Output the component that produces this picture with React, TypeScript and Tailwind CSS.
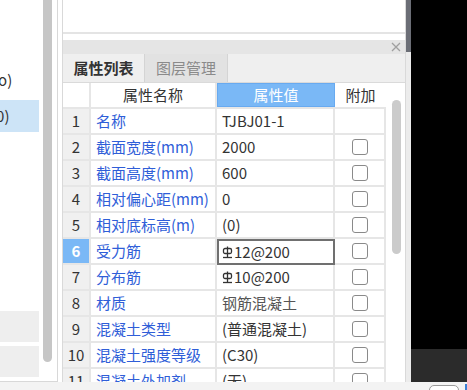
import React from "react";

const font = { fontFamily: '"Noto Sans CJK SC", "Noto Sans", sans-serif' };

type Row = { no: string; name: string; value: React.ReactNode; check: boolean; grayValue?: boolean };

function Rebar() {
  return (
    <svg width="11" height="13" viewBox="0 0 11 13" className="mr-[1px] inline-block" fill="none" stroke="#333" strokeWidth="1.3">
      <path d="M5.5 0.5 V11.5" />
      <rect x="1.5" y="2.5" width="8" height="5" rx="1.5" />
      <path d="M1 11.5 H10" />
    </svg>
  );
}

const rows: Row[] = [
  { no: "1", name: "名称", value: "TJBJ01-1", check: false },
  { no: "2", name: "截面宽度(mm)", value: "2000", check: true },
  { no: "3", name: "截面高度(mm)", value: "600", check: true },
  { no: "4", name: "相对偏心距(mm)", value: "0", check: true },
  { no: "5", name: "相对底标高(m)", value: "(0)", check: true },
  {
    no: "6",
    name: "受力筋",
    value: (
      <span className="flex items-center">
        <Rebar />
        12@200
      </span>
    ),
    check: true,
  },
  {
    no: "7",
    name: "分布筋",
    value: (
      <span className="flex items-center">
        <Rebar />
        10@200
      </span>
    ),
    check: true,
  },
  { no: "8", name: "材质", value: "钢筋混凝土", check: true, grayValue: true },
  { no: "9", name: "混凝土类型", value: "(普通混凝土)", check: true },
  { no: "10", name: "混凝土强度等级", value: "(C30)", check: true },
  { no: "11", name: "混凝土外加剂", value: "(无)", check: true },
];

function Checkbox() {
  return <div className="h-[16px] w-[16px] rounded-[3px] border-[1.5px] border-[#8a8a8a] bg-white" />;
}

export default function App() {
  return (
    <div style={font} className="flex h-[390px] w-[467px] flex-col overflow-hidden bg-white text-[15px] text-[#333]">
      <div className="flex h-[382px] flex-row">
        {/* left panel */}
        <div className="flex w-[58px] flex-row border-r border-b border-[#d8d8d8]">
          <div className="flex w-[39px] flex-col overflow-hidden">
            <div className="mt-[68px] flex h-[24px] items-center whitespace-nowrap text-[#333]">
              <span className="ml-[-7px]">(o)</span>
            </div>
            <div className="mt-[8px] flex h-[32px] items-center whitespace-nowrap bg-[#cde4f7] text-[#333]">
              <span className="ml-[-9px]">(0)</span>
            </div>
            <div className="mt-[179px] h-[31px] bg-[#eeeeee]" />
            <div className="mt-[4px] h-[31px] bg-[#eeeeee]" />
          </div>
          <div className="ml-[4px] h-[362px] w-[9px] rounded-b-full bg-[#c6c6c6]" />
        </div>
        <div className="w-[4px]" />

        {/* right panel */}
        <div className="flex w-[344px] flex-col border-x border-[#d9d9d9]">
          <div className="h-[34px] border-b-2 border-[#e4e4e4] bg-white" />
          <div className="h-[6px] bg-white" />
          <div className="flex h-[14px] items-center justify-end bg-[#e5e5e5] pr-[4px]">
            <svg width="10" height="10" viewBox="0 0 10 10" stroke="#a0a0a0" strokeWidth="1.3">
              <path d="M1 1 L9 9 M9 1 L1 9" />
            </svg>
          </div>
          <div className="flex h-[29px] flex-row border-b border-[#dadada] bg-[#efefef]">
            <div className="flex w-[82px] items-center justify-center border-r border-[#d4d4d4] font-bold text-[#333]">
              属性列表
            </div>
            <div className="flex w-[83px] items-center justify-center border-r border-[#d4d4d4] bg-[#e2e2e2] text-[#8a8a8a]">
              图层管理
            </div>
          </div>

          <div className="flex min-h-0 flex-1 flex-row overflow-hidden">
            <div className="w-[323px]">
              {/* header */}
              <div className="flex h-[26px] flex-row border-b-2 border-[#e6e6e6]">
                <div className="w-[28px] border-r-2 border-[#e6e6e6] bg-white" />
                <div className="flex w-[126px] items-center justify-center border-r-2 border-[#e6e6e6] bg-white">属性名称</div>
                <div className="flex w-[118px] items-center justify-center border border-[#68aaf0] bg-[#7ab8f6] text-white">属性值</div>
                <div className="flex w-[51px] items-center justify-center bg-white">附加</div>
              </div>
              {rows.map((r) => {
                const sel = r.no === "6";
                return (
                  <div key={r.no} className="flex h-[26px] flex-row border-b-2 border-[#e6e6e6]">
                    <div
                      className={
                        sel
                          ? "flex w-[28px] items-center justify-center border-r-2 border-[#e6e6e6] bg-[#7ab8f6] font-bold text-white"
                          : "flex w-[28px] items-center justify-center border-r-2 border-[#e6e6e6] bg-[#f0f0f0] text-[#333]"
                      }
                    >
                      {r.no}
                    </div>
                    <div className="flex w-[126px] items-center overflow-hidden whitespace-nowrap border-r-2 border-[#e6e6e6] pl-[5px] text-[#2f5ed8]">
                      {r.name}
                    </div>
                    <div
                      className={
                        sel
                          ? "mb-[-2px] flex w-[118px] items-center border-2 border-[#707070] pl-[3px] text-[#333]"
                          : r.grayValue
                          ? "flex w-[118px] items-center border-r-2 border-[#e6e6e6] pl-[5px] text-[#555]"
                          : "flex w-[118px] items-center border-r-2 border-[#e6e6e6] pl-[5px] text-[#333]"
                      }
                    >
                      {r.value}
                    </div>
                    <div className="flex w-[51px] items-center justify-center border-r-2 border-[#e6e6e6]">
                      {r.check && <Checkbox />}
                    </div>
                  </div>
                );
              })}
            </div>
            <div className="w-[19px] bg-white pl-[6px]">
              <div className="mt-[17px] h-[154px] w-[9px] rounded-full bg-[#cbcbcb]" />
            </div>
          </div>
        </div>

        {/* far right */}
        <div className="flex w-[5px] flex-col">
          <div className="h-[52px] bg-[#6b6e76]" />
          <div className="flex-1 bg-[#ececec]" />
        </div>
        <div className="flex w-[56px] flex-col">
          <div className="h-[349px] bg-black" />
          <div className="flex-1 bg-[#2b2b2b]" />
        </div>
      </div>
      <div className="flex h-[8px] flex-row justify-end bg-[#f3f3f3]">
        <div className="mr-[6px] mt-[3px] h-[10px] w-[30px] rounded-t-[5px] border border-[#9a9a9a] bg-white" />
        <div className="mt-[2px] h-[10px] w-[2px] bg-[#3b7fd6]" />
      </div>
    </div>
  );
}
